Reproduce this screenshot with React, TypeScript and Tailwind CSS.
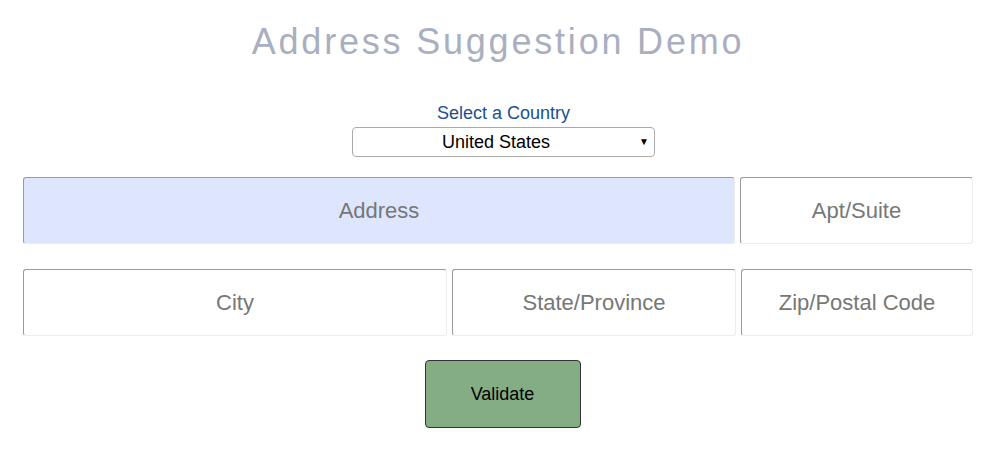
import { useState } from 'react';

const inputBase =
  "h-[67px] rounded-[3px] border border-t-[#9a9a9a] border-l-[#9a9a9a] border-b-[#ececec] border-r-[#ececec] text-center text-[22px] text-[#333] placeholder:text-[#777] outline-none";

export default function App() {
  const [country, setCountry] = useState('US');
  const [address, setAddress] = useState({ street: '', apt: '', city: '', state: '', zip: '' });

  return (
    <div className="min-h-screen bg-white font-['Liberation_Sans',Arial,sans-serif]">
      <div className="w-[950px] ml-[23px] flex flex-col">
        {/* Title */}
        <h1 className="mt-[22px] h-[40px] leading-[40px] text-center text-[36px] tracking-[2.8px] text-[#a9afbf] font-normal">
          Address Suggestion Demo
        </h1>

        {/* Country select */}
        <div className="mt-[42px] pl-[11px] flex flex-col items-center">
          <label className="h-[18px] leading-[18px] text-[18px] text-[#1b4f91]">Select a Country</label>
          <div className="relative mt-[5px] w-[303px] h-[30px]">
            <select
              value={country}
              onChange={(e) => setCountry(e.target.value)}
              className="w-full h-full appearance-none rounded-[4px] border border-[#aaa] bg-white pr-[15px] text-center text-[18px] text-black outline-none"
            >
              <option value="US">United States</option>
              <option value="CA">Canada</option>
            </select>
            <span className="pointer-events-none absolute right-[6px] top-[7px] text-[10px] text-black">▼</span>
          </div>
        </div>

        {/* Row 1 */}
        <div className="mt-[20px] flex gap-[5px]">
          <input
            placeholder="Address"
            value={address.street}
            onChange={(e) => setAddress({ ...address, street: e.target.value })}
            className={`${inputBase} w-[712px] bg-[#dde6fd]`}
          />
          <input
            placeholder="Apt/Suite"
            value={address.apt}
            onChange={(e) => setAddress({ ...address, apt: e.target.value })}
            className={`${inputBase} w-[233px] bg-white`}
          />
        </div>

        {/* Row 2 */}
        <div className="mt-[25px] flex gap-[5px]">
          <input
            placeholder="City"
            value={address.city}
            onChange={(e) => setAddress({ ...address, city: e.target.value })}
            className={`${inputBase} w-[424px] bg-white`}
          />
          <input
            placeholder="State/Province"
            value={address.state}
            onChange={(e) => setAddress({ ...address, state: e.target.value })}
            className={`${inputBase} w-[284px] bg-white`}
          />
          <input
            placeholder="Zip/Postal Code"
            value={address.zip}
            onChange={(e) => setAddress({ ...address, zip: e.target.value })}
            className={`${inputBase} w-[232px] bg-white`}
          />
        </div>

        {/* Validate */}
        <div className="mt-[24px] pl-[9px] flex justify-center">
          <button className="w-[156px] h-[68px] rounded-[4px] border border-[#333] bg-[#84ad84] text-[18px] text-black">
            Validate
          </button>
        </div>
      </div>
    </div>
  );
}
